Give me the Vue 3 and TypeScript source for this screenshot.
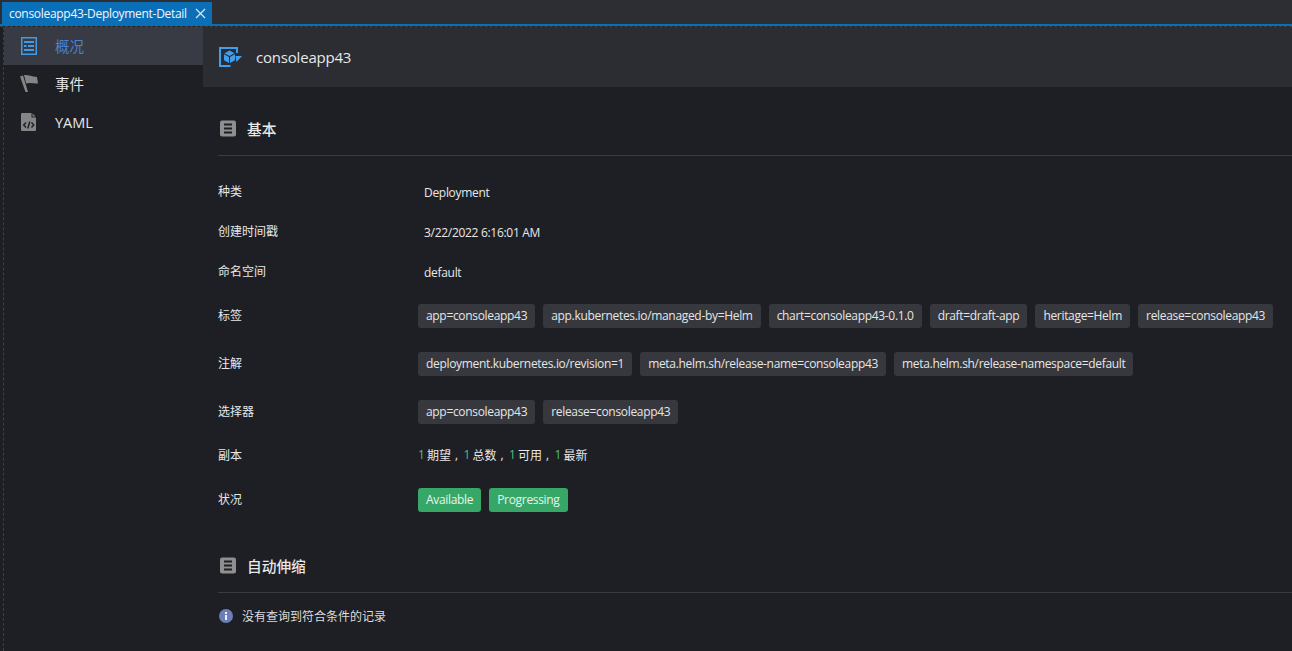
<script setup lang="ts">
interface Row { label: string; text?: string; tags?: string[]; green?: boolean; replicas?: boolean }
const rows: Row[] = [
  { label: '种类', text: 'Deployment' },
  { label: '创建时间戳', text: '3/22/2022 6:16:01 AM' },
  { label: '命名空间', text: 'default' },
  { label: '标签', tags: ['app=consoleapp43', 'app.kubernetes.io/managed-by=Helm', 'chart=consoleapp43-0.1.0', 'draft=draft-app', 'heritage=Helm', 'release=consoleapp43'] },
  { label: '注解', tags: ['deployment.kubernetes.io/revision=1', 'meta.helm.sh/release-name=consoleapp43', 'meta.helm.sh/release-namespace=default'] },
  { label: '选择器', tags: ['app=consoleapp43', 'release=consoleapp43'] },
  { label: '副本', replicas: true },
  { label: '状况', tags: ['Available', 'Progressing'], green: true },
]
const replicas = ['期望', '总数', '可用', '最新']
</script>

<template>
  <div class="window">
    <div class="tabstrip">
      <div class="tab">
        <span class="tabtext">consoleapp43-Deployment-Detail</span>
        <svg class="close" width="11" height="11" viewBox="0 0 11 11"><path d="M1 1l9 9M10 1l-9 9" stroke="#dbe8f4" stroke-width="1.2" fill="none" /></svg>
      </div>
    </div>
    <div class="body">
      <aside class="side">
        <div class="item active">
          <svg class="ico" width="20" height="20" viewBox="0 0 20 20">
            <path d="M1.750 1.750h14.500v16.500H1.750z" fill="none" stroke="#3f9be8" stroke-width="1.500" />
            <path d="M4 5h10v2H4zM4 9h2.500v2H4zM8 9h6v2H8zM4 13h10v2H4z" fill="#3f9be8" />
          </svg>
          <span class="cjk">概况</span>
        </div>
        <div class="item">
          <svg class="ico" width="20" height="20" viewBox="0 0 20 20">
            <path d="M0 2.500L3 1.500L8 18H5.500z" fill="#858585" />
            <path d="M4 1C8 .5 11 2.500 17 3L18 9.500C14 10 10 8 6.200 9.500z" fill="#858585" />
          </svg>
          <span class="cjk">事件</span>
        </div>
        <div class="item">
          <svg class="ico" width="20" height="20" viewBox="0 0 20 20">
            <path d="M2 1h10.500L16 4.500V18a1 1 0 0 1-1 1H2a1 1 0 0 1-1-1V2a1 1 0 0 1 1-1z" fill="#858585" />
            <path d="M11.500 0.500h1.500L16.500 4v1.500h-5z" fill="#1e1f24" />
            <path d="M12.500 1.500L15.500 4.500H12.500z" fill="#858585" />
            <path d="M6 10.500l-2.300 2.500 2.300 2.500M11.500 10.500l2.300 2.500-2.300 2.500M9.800 9.500l-2 7" stroke="#1e1f24" stroke-width="1.400" fill="none" />
          </svg>
          <span>YAML</span>
        </div>
      </aside>
      <main class="main">
        <header class="head">
          <svg width="24" height="22" viewBox="0 0 24 22">
            <path d="M18 7V2H1v18h10.500" fill="none" stroke="#3f9fef" stroke-width="2" />
            <path d="M5.500 7.300L10.500 4.500l5 2.800-5 2.700zM5 8.200l5 2.800v6L5 14.200zM16 8.200l-5 2.800v6l5-2.800z" fill="#3f9fef" />
            <path d="M16.500 10h6.500l-5.500 6z" fill="#3f9fef" />
          </svg>
          <span class="appname">consoleapp43</span>
        </header>
        <section class="content">
          <div class="section-title">
            <svg width="16" height="17" viewBox="0 0 16 17"><rect y=".5" width="16" height="16" rx="2" fill="#8f8f8f" /><path d="M4 3.500h8v2H4zM4 7.500h8v2H4zM4 11.500h8v2H4z" fill="#1e1f24" /></svg>
            <span>基本</span>
          </div>
          <div class="rows">
            <div v-for="r in rows" :key="r.label" class="row" :class="{ tagrow: r.tags }">
              <div class="label">{{ r.label }}</div>
              <div v-if="r.text" class="val">{{ r.text }}</div>
              <div v-else-if="r.tags" class="tags">
                <span v-for="t in r.tags" :key="t" class="tag" :class="{ green: r.green }">{{ t }}</span>
              </div>
              <div v-else class="reps">
                <span v-for="(w, i) in replicas" :key="w" class="rep"><b>1</b><span>{{ w }}</span><i v-if="i < 3">,</i></span>
              </div>
            </div>
          </div>
          <div class="section-title second">
            <svg width="16" height="17" viewBox="0 0 16 17"><rect y=".5" width="16" height="16" rx="2" fill="#8f8f8f" /><path d="M4 3.500h8v2H4zM4 7.500h8v2H4zM4 11.500h8v2H4z" fill="#1e1f24" /></svg>
            <span>自动伸缩</span>
          </div>
          <div class="empty">
            <svg width="14" height="14" viewBox="0 0 14 14"><circle cx="7" cy="7" r="7" fill="#6a7fb5" /><rect x="6" y="6" width="2" height="5" fill="#f0f2f8" /><rect x="6" y="3" width="2" height="2" fill="#f0f2f8" /></svg>
            <span>没有查询到符合条件的记录</span>
          </div>
        </section>
      </main>
    </div>
  </div>
</template>

<style>
html, body { margin: 0; background: #1e1f24; }
</style>

<style scoped>
.window {
  width: 1292px;
  height: 651px;
  overflow: hidden;
  display: flex;
  flex-direction: column;
  background: #1e1f24;
  color: #e8e8e8;
  font-family: "Open Sans", "Noto Sans CJK SC", sans-serif;
  font-size: 12px;
}
.tabstrip {
  flex: none;
  height: 22px;
  padding-top: 2px;
  background: #2d2e33;
  border-bottom: 2px solid #0b6fb8;
  display: flex;
}
.tab {
  width: 210px;
  margin-left: 2px;
  background: #0b6fb8;
  color: #f2f6fa;
  display: flex;
  align-items: center;
  justify-content: space-between;
  padding: 0 6px 0 7px;
  box-sizing: border-box;
}
.tabtext { white-space: nowrap; letter-spacing: -0.3px; }
.body {
  flex: 1;
  display: flex;
  min-height: 0;
  padding-left: 3px;
  border-top: 1px dashed #3e3f43;
}
.side {
  width: 200px;
  box-sizing: border-box;
  flex: none;
  border-left: 1px dashed #3e3f43;
}
.item {
  height: 38px;
  display: flex;
  align-items: center;
  padding-left: 16px;
  font-size: 14.5px;
  color: #e6e6e6;
}
.item .ico { flex: none; margin-right: 15px; }
.item .cjk { margin-bottom: 2px; }
.item.active { background: #383b43; color: #4a80cf; }
.main { flex: 1; min-width: 0; }
.head {
  height: 60px;
  background: #2b2d32;
  display: flex;
  align-items: center;
  padding-left: 16px;
  gap: 13px;
  font-size: 15px;
  color: #e8e8e8;
}
.appname { letter-spacing: -0.2px; }
.content { padding-left: 15px; }
.section-title {
  height: 50px;
  padding: 16px 0 2px 2px;
  display: flex;
  align-items: center;
  gap: 11px;
  font-size: 14.7px;
  font-weight: 500;
  border-bottom: 1px solid #3a3b40;
}
.section-title.second { padding-top: 0; margin-top: 16px; }
.rows { padding-top: 16px; }
.row { height: 40px; display: flex; align-items: center; }
.row.tagrow { height: 48px; }
.label { width: 200px; flex: none; padding-bottom: 2px; }
.val { padding-left: 6px; letter-spacing: -0.3px; }
.tags { display: flex; gap: 8px; }
.tag {
  height: 24px;
  line-height: 24px;
  padding: 0 8px;
  border-radius: 3px;
  background: #36383e;
  color: #e6e6e6;
  white-space: nowrap;
  letter-spacing: -0.32px;
}
.tag.green { background: #37a768; color: #e6f6ec; }
.reps { display: flex; padding-bottom: 2px; }
.rep { display: flex; width: 45.500px; }
.rep b { width: 9px; color: #4fbf7f; font-weight: 400; }
.rep i { font-style: normal; margin-left: 4px; }
.empty {
  display: flex;
  align-items: center;
  gap: 9px;
  padding: 14px 0 0 1px;
  color: #dcdcdc;
}
</style>
